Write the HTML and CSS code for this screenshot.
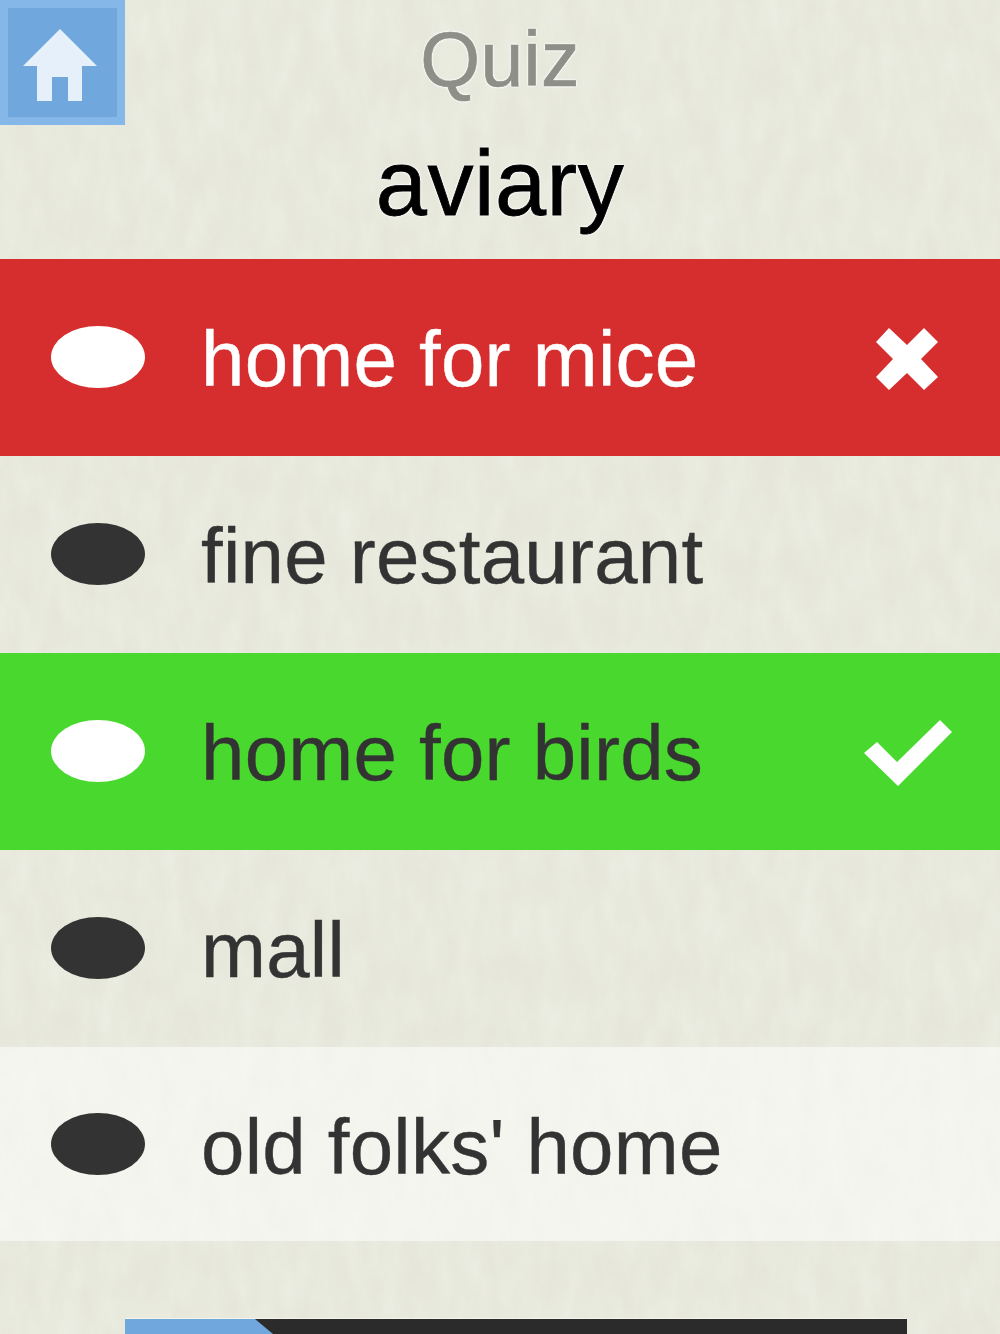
FILE: index.html
```html
<!DOCTYPE html>
<html>
<head>
  <title>Quiz</title>
  <link rel="stylesheet" href="styles.css">
</head>
<body>

  <svg class="paper" width="1000" height="1334">
    <filter id="grain">
      <feTurbulence type="fractalNoise" baseFrequency="0.05 0.02" numOctaves="4" seed="7"/>
      <feColorMatrix values="0 0 0 0 1  0 0 0 0 1  0 0 0 0 0.96  0.4 0 0 0 -0.1"/>
    </filter>
    <rect width="1000" height="1334" filter="url(#grain)"/>
  </svg>

  <div class="page">
    <div class="top">
      <a class="home-btn">
        <svg width="125" height="125" viewBox="0 0 125 125">
          <path class="home-icon" d="M60 29 L97 66 H82 V101 H68 V77 H52 V101 H37 V66 H23 Z"/>
        </svg>
      </a>
      <h1 class="title">Quiz</h1>
    </div>

    <h2 class="word">aviary</h2>

    <div class="answers">
      <div class="answer wrong">
        <span class="dot"></span>
        <span class="label">home for mice</span>
        <svg class="mark" width="100" height="80" viewBox="0 0 100 80">
          <path d="M26 8 L44 25 L61 8 L75 22 L58 39 L75 57 L61 70 L44 53 L26 70 L13 57 L30 39 L13 22 Z"/>
        </svg>
      </div>
      <div class="answer">
        <span class="dot"></span>
        <span class="label">fine restaurant</span>
      </div>
      <div class="answer right">
        <span class="dot"></span>
        <span class="label">home for birds</span>
        <svg class="mark" width="100" height="80" viewBox="0 0 100 80">
          <path d="M77 6 L89 18 L35 72 L1 39 L14 28 L34 48 Z"/>
        </svg>
      </div>
      <div class="answer">
        <span class="dot"></span>
        <span class="label">mall</span>
      </div>
      <div class="answer picked">
        <span class="dot"></span>
        <span class="label">old folks' home</span>
      </div>
    </div>

    <div class="progress">
      <div class="progress-fill"></div>
    </div>
  </div>

</body>
</html>
```

FILE: styles.css
```css
html, body {
  margin: 0;
  height: 1334px;
  overflow: hidden;
}

body {
  position: relative;
  font-family: "Liberation Sans", Arial, sans-serif;
  background-color: #e6e7da;
}

.paper {
  position: absolute;
  top: 0;
  left: 0;
}

.page {
  position: relative;
}

.top {
  display: grid;
  grid-template-columns: 125px 1fr 125px;
  height: 125px;
}

.home-btn {
  display: block;
  width: 125px;
  height: 125px;
  box-sizing: border-box;
  background-color: #70a8de;
  box-shadow: inset 0 0 0 8px #85b8e8;
}

.home-btn svg {
  display: block;
}

.home-icon {
  fill: #e6f0fa;
}

.title {
  margin: 0;
  font-size: 77px;
  font-weight: normal;
  line-height: 119px;
  text-align: center;
  letter-spacing: 0.3px;
  color: #8e8f87;
  -webkit-text-stroke: 0.7px #8e8f87;
  text-shadow: 0 0 3px #fff, 0 0 3px #fff, 0 0 2px #fff, 0 0 2px #fff, 0 0 1px #fff;
}

.word {
  margin: 0;
  height: 134px;
  font-size: 92px;
  font-weight: normal;
  line-height: 116px;
  text-align: center;
  letter-spacing: 0.5px;
  color: #000;
  -webkit-text-stroke: 0.8px #000;
  text-shadow: 0 0 3px #fff, 0 0 3px #fff, 0 0 2px #fff, 0 0 2px #fff, 0 0 1px #fff;
}

.answer {
  display: flex;
  align-items: center;
  height: 197px;
  padding-left: 51px;
  color: #333;
}

.answer:last-child {
  height: 194px;
}

.dot {
  flex: none;
  width: 94px;
  height: 62px;
  margin-top: -2px;
  border-radius: 50%;
  background-color: #333;
}

.answer:last-child .dot {
  margin-top: 0;
}

.label {
  flex: 1;
  margin-left: 56px;
  margin-top: 4px;
  font-size: 78px;
  letter-spacing: 0.25px;
  -webkit-text-stroke: 0.4px currentColor;
}

.answer:last-child .label {
  margin-top: 6px;
}

.mark {
  flex: none;
  margin-top: 4px;
  margin-right: 37px;
  fill: #fff;
}

.wrong {
  background-color: #d62e2e;
  color: #fff;
}

.right {
  background-color: #49d82e;
}

.wrong .dot,
.right .dot {
  background-color: #fff;
}

.picked {
  background-color: rgba(255, 255, 255, 0.5);
}

.progress {
  width: 782px;
  height: 40px;
  margin: 78px 0 0 125px;
  background-color: #2b2b2b;
  box-shadow: 0 -1px 0 #f4f4ea;
}

.progress-fill {
  width: 178px;
  height: 40px;
  background-color: #70a8de;
  clip-path: polygon(0 0, 130px 0, 178px 40px, 0 40px);
}
```
